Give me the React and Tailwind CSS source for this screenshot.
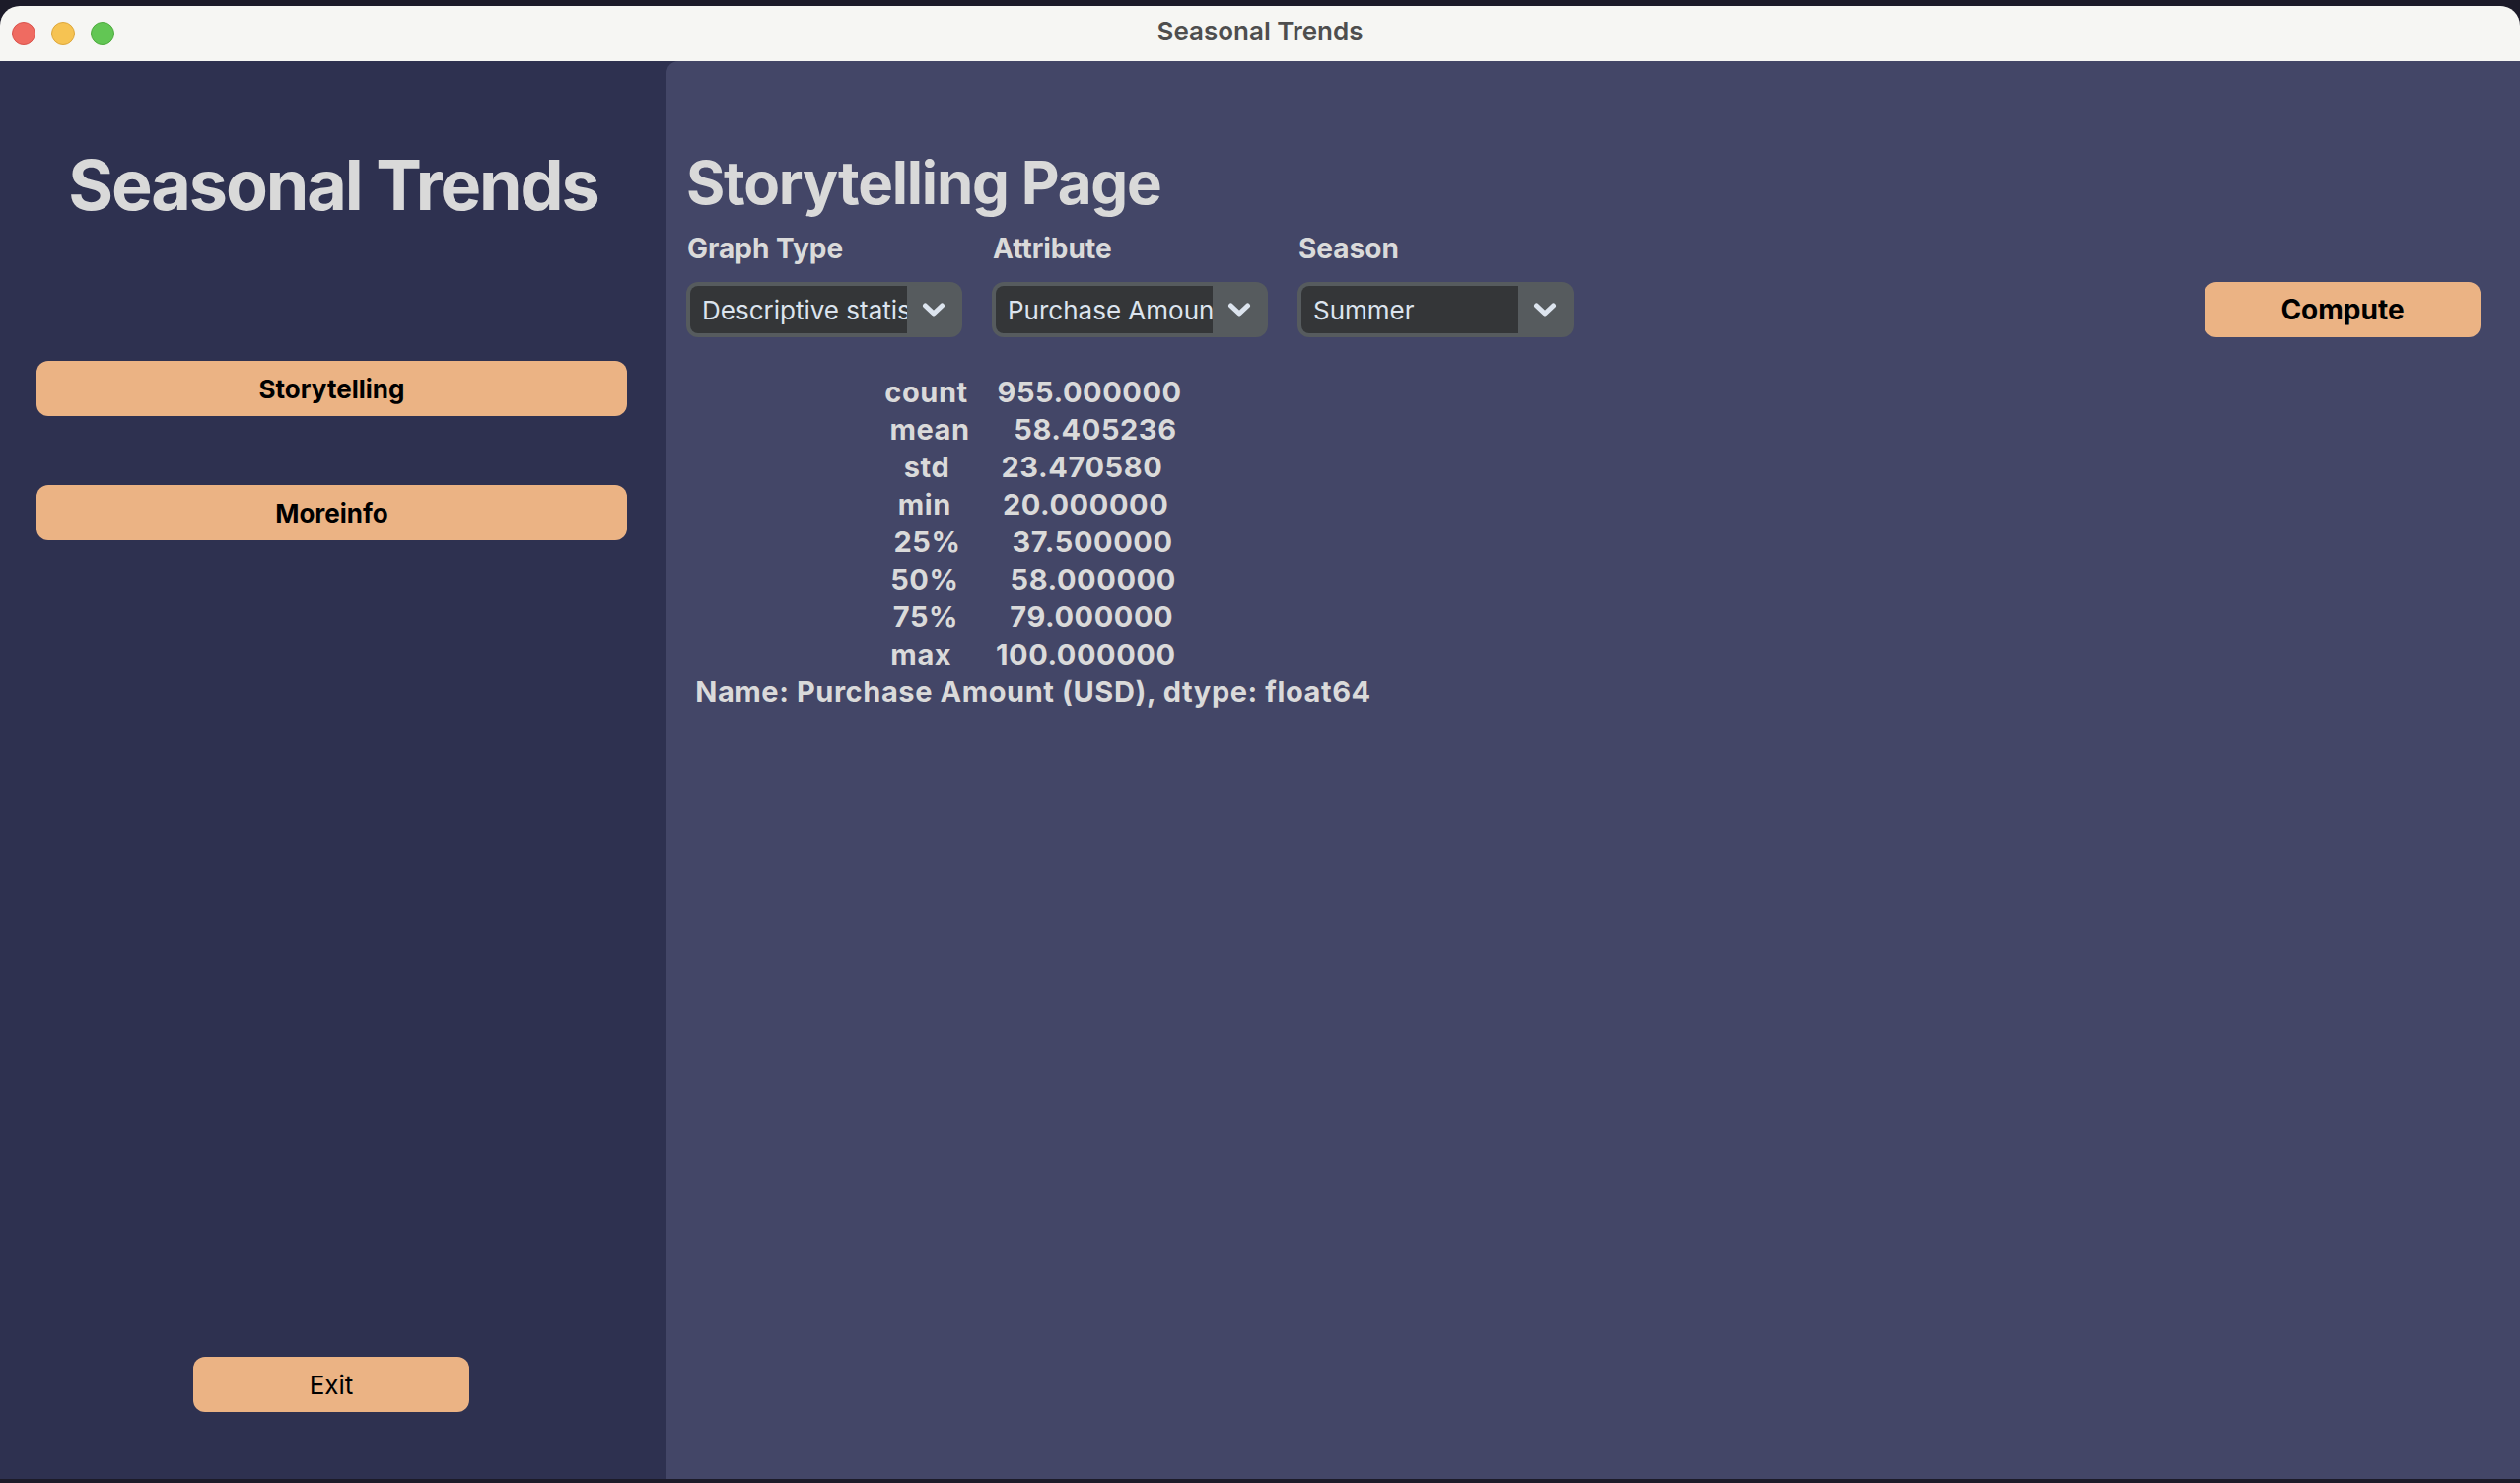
import { useState } from "react";

const FONT = { fontFamily: "Inter, 'Noto Sans', sans-serif" };

const STATS = [
    "count    955.000000",
    "mean      58.405236",
    "std       23.470580",
    "min       20.000000",
    "25%       37.500000",
    "50%       58.000000",
    "75%       79.000000",
    "max      100.000000",
    "Name: Purchase Amount (USD), dtype: float64",
];

function Chevron() {
    return (
        <svg width="24" height="14" viewBox="0 0 24 14" fill="none">
            <path
                d="M3.5 3 L12 11 L20.5 3"
                stroke="#dce4ee"
                strokeWidth="5"
                strokeLinecap="round"
                strokeLinejoin="round"
            />
        </svg>
    );
}

function Combo({ value }) {
    return (
        <div className="flex h-[56px] w-[280px] rounded-[12px] bg-[#565b5e] p-[4px]">
            <div className="flex w-[220px] items-center overflow-hidden rounded-l-[8px] bg-[#343638] pl-[12px]">
                <span className="whitespace-nowrap text-[26px] text-[#dce4ee]">{value}</span>
            </div>
            <div className="flex flex-1 items-center justify-center pl-[2px]">
                <Chevron />
            </div>
        </div>
    );
}

function Field({ label, value }) {
    return (
        <div className="flex flex-col gap-[20px]">
            <span className="pl-[1px] text-[28px] font-bold leading-none text-[#dadada]">{label}</span>
            <Combo value={value} />
        </div>
    );
}

function NavButton({ children }) {
    return (
        <button className="ml-[37px] h-[56px] w-[599px] rounded-[12px] bg-[#ebb384] text-[26px] font-bold text-black">
            {children}
        </button>
    );
}

export default function App() {
    const [page] = useState("storytelling");

    return (
        <div className="flex h-[1504px] w-[2556px] flex-col bg-[#1c1b29] pb-[4px] pt-[6px]" style={FONT}>
            <div className="flex flex-1 flex-col overflow-hidden rounded-t-[20px]">
                {/* barra de título */}
                <div className="grid h-[56px] grid-cols-[1fr_auto_1fr] items-center bg-[#f6f6f3]">
                    <div className="flex gap-[16px] pl-[12px]">
                        <span className="h-[24px] w-[24px] rounded-full border border-[#d9534c] bg-[#ef6b61]" />
                        <span className="h-[24px] w-[24px] rounded-full border border-[#dca73d] bg-[#f6c352]" />
                        <span className="h-[24px] w-[24px] rounded-full border border-[#4fab3f] bg-[#62c654]" />
                    </div>
                    <span className="mb-[5px] text-[26px] font-semibold text-[#4e4e4e]">Seasonal Trends</span>
                    <div />
                </div>

                <div className="flex flex-1 bg-[#2e3150]">
                    {/* sidebar */}
                    <div className="flex w-[676px] flex-col">
                        <h1 className="mt-[91px] text-center text-[70px] font-bold leading-none tracking-[-0.03em] text-[#d9d9d9]">
                            Seasonal Trends
                        </h1>
                        <div className="mt-[143px]">
                            <NavButton>Storytelling</NavButton>
                        </div>
                        <div className="mt-[70px]">
                            <NavButton>Moreinfo</NavButton>
                        </div>
                        <div className="mb-[68px] mt-auto flex justify-center pr-[4px]">
                            <button className="h-[56px] w-[280px] rounded-[12px] bg-[#ebb384] text-[26px] text-black">
                                Exit
                            </button>
                        </div>
                    </div>

                    {/* main */}
                    {page === "storytelling" && (
                        <div className="flex flex-1 flex-col rounded-tl-[12px] bg-[#434667] pl-[20px] pr-[40px] pt-[93px]">
                            <h2 className="text-[60px] font-bold leading-none tracking-[-0.02em] text-[#d9d9d9]">
                                Storytelling Page
                            </h2>

                            <div className="mt-[23px] flex items-end">
                                <div className="flex gap-[30px]">
                                    <Field label="Graph Type" value="Descriptive statistics" />
                                    <Field label="Attribute" value="Purchase Amount (USD)" />
                                    <Field label="Season" value="Summer" />
                                </div>
                                <button className="ml-auto h-[56px] w-[280px] rounded-[12px] bg-[#ebb384] text-[28px] font-bold text-black">
                                    Compute
                                </button>
                            </div>

                            {/* salida de describe() */}
                            <div className="mt-[37px] w-[704px] text-center text-[29px] font-bold leading-[38px] tracking-[0.02em] text-[#dadada]">
                                {STATS.map((ln) => (
                                    <div key={ln} className="whitespace-pre">
                                        {ln}
                                    </div>
                                ))}
                            </div>
                        </div>
                    )}
                </div>
            </div>
        </div>
    );
}
